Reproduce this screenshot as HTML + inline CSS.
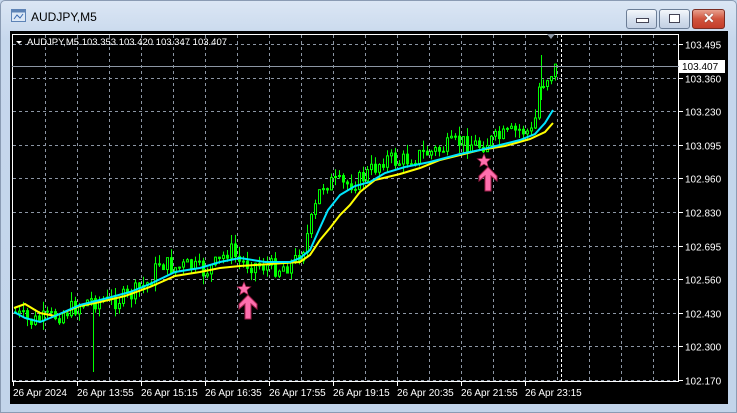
<!DOCTYPE html>
<html><head><meta charset="utf-8"><style>
body{margin:0;width:737px;height:413px;overflow:hidden;background:#c5d6eb;font-family:"Liberation Sans",sans-serif;}
#win{position:absolute;left:0;top:0;width:735px;height:411px;border:1px solid #8a9bb3;background:linear-gradient(#dbe6f4,#c6d7ec 40px,#c2d4ea);border-radius:5px 5px 0 0}
#title{position:absolute;left:31px;top:10px;font-size:12px;color:#000}
.btn{position:absolute;top:9px;height:18px;border:1px solid #6b7d96;border-radius:3px;background:linear-gradient(#f4f7fb,#d6e0ee 50%,#c3d0e3)}
#chart{position:absolute;left:10px;top:31px;}
</style></head><body>
<div id="win"></div>
<svg style="position:absolute;left:11px;top:9px" width="16" height="14"><rect x="0.5" y="0.5" width="14" height="12" fill="#dce8f6" stroke="#5d83b6"/><rect x="0.5" y="0.5" width="14" height="3" fill="#5d83b6"/><path d="M3 10 L6 6 L9 9 L12 5" stroke="#3a6ab0" fill="none"/></svg>
<div id="title">AUDJPY,M5</div>
<div class="btn" style="left:626px;width:29px"><div style="position:absolute;left:9px;top:8px;width:11px;height:3px;background:#fff;border:1px solid #445"></div></div>
<div class="btn" style="left:659px;width:29px"><div style="position:absolute;left:9px;top:4px;width:9px;height:7px;border:1px solid #445;background:#fff"></div></div>
<div class="btn" style="left:692px;width:31px;background:linear-gradient(#e8a08e,#d0533d 50%,#c43d2a);border-color:#7a2c22"><div style="position:absolute;left:10px;top:0px;color:#fff;font-weight:bold;font-size:14px;text-shadow:0 0 1px #333">✕</div></div>
<svg id="chart" width="718" height="373" viewBox="10 31 718 373" xmlns="http://www.w3.org/2000/svg" font-family="Liberation Sans, sans-serif" font-size="10">
<rect x="10" y="31" width="718" height="373" fill="#000"/>
<g id="grid" stroke="#8c96a4" stroke-dasharray="3,3" stroke-width="1"></g>
<line x1="561.5" y1="34" x2="561.5" y2="382" stroke="#fff" stroke-dasharray="3,2"/>
<g id="cand"></g>
<polyline id="yel" fill="none" stroke="#ffff00" stroke-width="2"/>
<polyline id="cya" fill="none" stroke="#00e5ff" stroke-width="2"/>
<rect x="12.5" y="34.5" width="666" height="347" fill="none" stroke="#fff"/>
<g id="axis" fill="#fff"></g>
<line x1="679" y1="66.5" x2="12" y2="66.5" stroke="#8c96a4"/>
<rect x="679" y="60" width="46" height="13" fill="#fff"/>
<text x="682" y="70" fill="#000">103.407</text>
<path d="M547 34 L555 34 L551 39Z" fill="#8c96a4"/>
<text x="27" y="45" fill="#fff" font-size="9.5">AUDJPY,M5  103.353 103.420 103.347 103.407</text>
<path d="M16 41 L22 41 L19 44Z" fill="#fff"/>
<g id="sig"></g>
</svg>
<script>
const ns="http://www.w3.org/2000/svg";
function el(p,t,a,txt){const e=document.createElementNS(ns,t);for(const k in a)e.setAttribute(k,a[k]);if(txt)e.textContent=txt;p.appendChild(e);return e;}
const g=document.getElementById('grid'),ax=document.getElementById('axis');
const prices=["103.495","103.360","103.230","103.095","102.960","102.830","102.695","102.560","102.430","102.300","102.170"];
for(let i=0;i<11;i++){const y=Math.round(44+i*33.6)+0.5;el(g,'line',{x1:13,x2:678,y1:y,y2:y});el(ax,'line',{x1:679,x2:683,y1:y,y2:y,stroke:'#fff'});el(ax,'text',{x:685,y:y+4},prices[i]);}
for(let x=45;x<678;x+=32){el(g,'line',{x1:x+0.5,x2:x+0.5,y1:35,y2:381});}
const labs=["26 Apr 2024","26 Apr 13:55","26 Apr 15:15","26 Apr 16:35","26 Apr 17:55","26 Apr 19:15","26 Apr 20:35","26 Apr 21:55","26 Apr 23:15"];
for(let i=0;i<9;i++){const x=13+64*i;el(ax,'line',{x1:x+0.5,x2:x+0.5,y1:382,y2:386,stroke:'#fff'});el(ax,'text',{x:x,y:396},labs[i]);}
function interp(pts,x){for(let i=1;i<pts.length;i++){if(x<=pts[i][0]){const a=pts[i-1],b=pts[i];return a[1]+(b[1]-a[1])*(x-a[0])/(b[0]-a[0]);}}return pts[pts.length-1][1];}
const P=[[14,312],[30,322],[50,318],[70,310],[90,300],[110,302],[130,296],[150,282],[160,262],[175,268],[190,266],[205,272],[220,262],[230,248],[240,262],[260,265],[280,268],[295,262],[305,245],[315,212],[322,185],[330,182],[345,185],[360,180],[375,168],[385,158],[400,162],[420,155],[440,150],[460,142],[480,145],[500,138],[520,130],[535,133],[538,90],[545,80],[552,72],[556,68]];
const C=[[14,312],[25,318],[40,322],[55,316],[80,305],[100,300],[130,292],[150,284],[175,272],[200,268],[220,262],[240,258],[265,262],[290,262],[300,258],[310,250],[318,232],[328,210],[340,195],[355,186],[370,182],[385,173],[405,167],[430,162],[460,154],[480,150],[500,145],[520,140],[535,134],[545,123],[553,110]];
const Y=[[14,308],[25,304],[40,313],[55,316],[80,306],[100,302],[125,296],[150,287],[175,276],[200,272],[220,268],[240,266],[270,264],[300,262],[310,255],[320,240],[330,228],[340,215],[350,205],[360,192],[375,180],[400,174],[420,168],[440,160],[460,155],[480,150],[505,146],[530,139],[545,132],[553,123]];
document.getElementById('cya').setAttribute('points',C.map(p=>p.join(',')).join(' '));
document.getElementById('yel').setAttribute('points',Y.map(p=>p.join(',')).join(' '));
let s=7;function r(){s=(s*9301+49297)%233280;return s/233280;}
const cg=document.getElementById('cand');
let prev=interp(P,14);
for(let x=14;x<=556;x+=4){const c=interp(P,x+2)+(r()-0.5)*18;const o=prev;const hi=Math.min(o,c)-r()*10,lo=Math.max(o,c)+r()*9;
el(cg,'line',{x1:x+1.5,x2:x+1.5,y1:hi,y2:lo,stroke:'#00ff00'});
const bull=c<o;el(cg,'rect',{x:x+0.5,y:Math.min(o,c),width:2,height:Math.max(1,Math.abs(o-c)),fill:bull?'#000':'#00ff00',stroke:'#00ff00','stroke-width':1});prev=c;}
el(cg,'line',{x1:93.5,x2:93.5,y1:300,y2:372,stroke:'#00ff00'});
el(cg,'line',{x1:541.5,x2:541.5,y1:55,y2:100,stroke:'#00ff00'});
const sg=document.getElementById('sig');
function star(cx,cy,R){let d='';for(let i=0;i<10;i++){const rr=i%2?R*0.45:R;const a=-Math.PI/2+i*Math.PI/5;d+=(i?'L':'M')+(cx+rr*Math.cos(a)).toFixed(1)+' '+(cy+rr*Math.sin(a)).toFixed(1);}return d+'Z';}
function sig(x,y){el(sg,'path',{d:star(x,y,7),fill:'#ff6fae',stroke:'#a0204a','stroke-width':0.7});
const a=x+4,t=y+6;el(sg,'path',{d:`M${a} ${t} L${a+9} ${t+9} L${a+9} ${t+14} L${a+3} ${t+9} L${a+3} ${t+24} L${a-3} ${t+24} L${a-3} ${t+9} L${a-9} ${t+14} L${a-9} ${t+9}Z`,fill:'#ff6fae',stroke:'#a0204a','stroke-width':1});}
sig(244,289);sig(484,161);
</script>
</body></html>
